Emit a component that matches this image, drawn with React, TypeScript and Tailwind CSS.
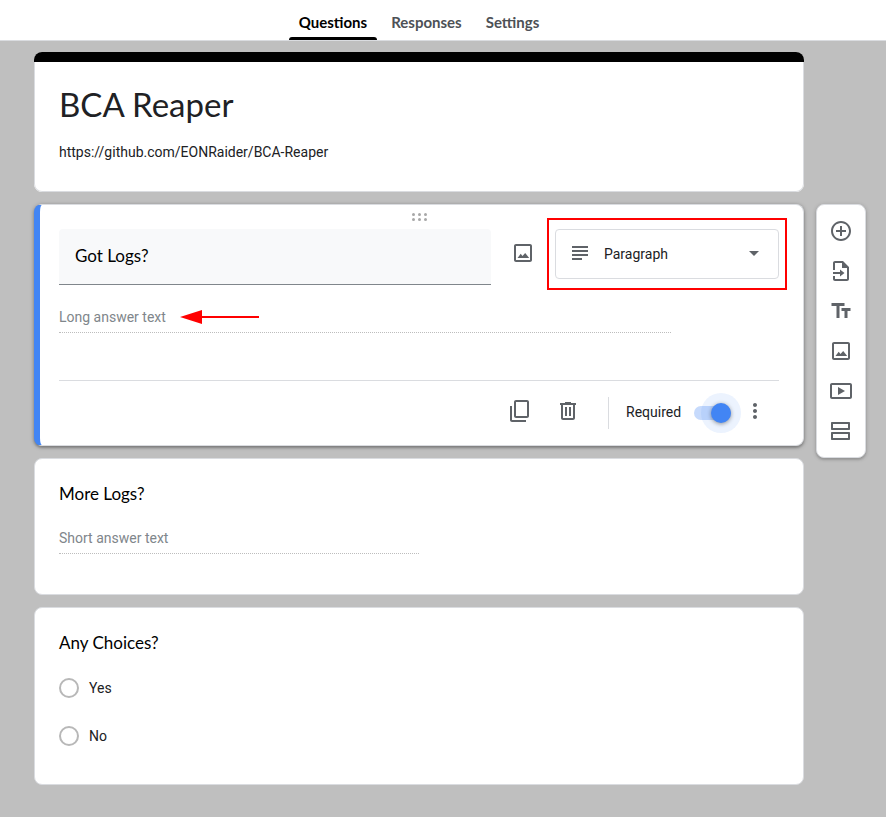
import type { ReactNode } from "react";

const display = "font-['Google_Sans',Lato,sans-serif]";

function Icon({ children }: { children: ReactNode }) {
  return (
    <svg viewBox="0 0 24 24" className="size-6 shrink-0 fill-[#5f6368]" aria-hidden="true">
      {children}
    </svg>
  );
}

const imageIcon = (
  <Icon>
    <path d="M19 5v14H5V5h14m0-2H5c-1.100 0-2 .9-2 2v14c0 1.100.9 2 2 2h14c1.100 0 2-.9 2-2V5c0-1.100-.9-2-2-2z" />
    <path d="M14.200 12l-2.700 3-1.800-2.200L6.500 17h11.700z" />
  </Icon>
);

const tools = [
  {
    label: "Add question",
    icon: (
      <Icon>
        <path d="M13 7h-2v4H7v2h4v4h2v-4h4v-2h-4V7zm-1-5C6.480 2 2 6.480 2 12s4.480 10 10 10 10-4.480 10-10S17.520 2 12 2zm0 18c-4.410 0-8-3.590-8-8s3.590-8 8-8 8 3.590 8 8-3.590 8-8 8z" />
      </Icon>
    ),
  },
  {
    label: "Import questions",
    icon: (
      <Icon>
        <path d="M14 2H6c-1.100 0-2 .9-2 2v7h2V4h7v5h5v11H6v-3H4v3c0 1.100.9 2 2 2h12c1.100 0 2-.9 2-2V8l-6-6z" />
        <path d="M4 13h7v-2.500l4.500 3.500-4.500 3.500V15H4z" />
      </Icon>
    ),
  },
  {
    label: "Add title and description",
    icon: (
      <Icon>
        <path d="M2.500 4v3h5v12h3V7h5V4h-13zm19 5h-9v3h3v7h3v-7h3V9z" />
      </Icon>
    ),
  },
  { label: "Add image", icon: imageIcon },
  {
    label: "Add video",
    icon: (
      <Icon>
        <path d="M21 4H3c-1.100 0-2 .9-2 2v12c0 1.100.9 2 2 2h18c1.100 0 2-.9 2-2V6c0-1.100-.9-2-2-2zm0 14H3V6h18v12z" />
        <path d="M9 8v8l7-4z" />
      </Icon>
    ),
  },
  {
    label: "Add section",
    icon: (
      <Icon>
        <path d="M19 5v4H4V5h15m1-2H3c-.6 0-1 .4-1 1v6c0 .6.4 1 1 1h17c.6 0 1-.4 1-1V4c0-.6-.4-1-1-1zM19 15v4H4v-4h15m1-2H3c-.6 0-1 .4-1 1v6c0 .6.4 1 1 1h17c.6 0 1-.4 1-1v-6c0-.6-.4-1-1-1z" />
      </Icon>
    ),
  },
];

function Tab({ label, active }: { label: string; active?: boolean }) {
  return (
    <button
      type="button"
      role="tab"
      aria-selected={!!active}
      className={`${display} flex flex-col justify-between text-[15px] font-bold ${active ? "text-black" : "text-[#4d5156]"}`}
    >
      <span className="px-3 pt-3 leading-5">{label}</span>
      <span className={`mx-0.5 h-[3px] self-stretch rounded-t-sm ${active ? "bg-black" : "bg-transparent"}`} />
    </button>
  );
}

function Choice({ label }: { label: string }) {
  return (
    <label className="flex h-12 items-center gap-2.5">
      <input type="radio" name="choice" className="size-5 appearance-none rounded-full border-2 border-[#b8b8b8] bg-white" />
      {label}
    </label>
  );
}

export default function App() {
  return (
    <div className="flex min-h-screen flex-col bg-[#bfbfbf] font-[Roboto,sans-serif] text-sm text-[#202124]">
      <header className="h-[41px] border-b border-[#dadce0] bg-white pr-[82px] pl-[34px]">
        <div role="tablist" className="flex h-full justify-center">
          <Tab label="Questions" active />
          <Tab label="Responses" />
          <Tab label="Settings" />
        </div>
      </header>

      <div className="flex items-start gap-3 pt-[11px] pr-5 pb-8 pl-[34px]">
        <main className="flex min-w-0 flex-1 flex-col gap-3">
          <section className="overflow-hidden rounded-lg bg-white">
            <div className="h-2.5 bg-black" />
            <div className="rounded-b-lg border border-t-0 border-[#dadce0] px-6 pt-[19px] pb-[29px]">
              <h1 className={`${display} text-[33px] leading-[46px]`}>BCA Reaper</h1>
              <p className="pt-[15px] leading-5">https://github.com/EONRaider/BCA-Reaper</p>
            </div>
          </section>

          <section className="rounded-lg border border-l-[6px] border-[#dadce0] border-l-[#4285f4] bg-white pr-6 pl-[19px] shadow-[0_2px_2px_rgba(0,0,0,0.14),0_1px_4px_rgba(0,0,0,0.35)]">
            <div className="flex h-6 justify-center pt-2">
              <svg viewBox="0 0 15 8" className="h-2 w-[15px] fill-[#a8a8a8]" aria-hidden="true">
                <circle cx="1.500" cy="1.500" r="1.500" />
                <circle cx="7.500" cy="1.500" r="1.500" />
                <circle cx="13.500" cy="1.500" r="1.500" />
                <circle cx="1.500" cy="6.500" r="1.500" />
                <circle cx="7.500" cy="6.500" r="1.500" />
                <circle cx="13.500" cy="6.500" r="1.500" />
              </svg>
            </div>

            <div className="flex items-start">
              <input
                type="text"
                aria-label="Question"
                defaultValue="Got Logs?"
                className={`${display} h-14 min-w-0 flex-1 rounded-t border-b border-[#80868b] bg-[#f8f9fa] px-4 pb-0.5 text-[17px] text-black outline-none`}
              />
              <button type="button" aria-label="Add image to question" className="mx-2 flex size-12 items-center justify-center">
                {imageIcon}
              </button>
              <div className="relative h-[50px] w-56">
                <select
                  aria-label="Question type"
                  className="size-full appearance-none rounded border border-[#dadce0] bg-white pl-12"
                >
                  <option>Paragraph</option>
                  <option>Short answer</option>
                </select>
                <div className="pointer-events-none absolute inset-0 flex items-center justify-between px-[13px] pb-0.5">
                  <Icon>
                    <path d="M14 17H4v2h10v-2zm6-8H4v2h16V9zM4 15h16v-2H4v2zM4 5v2h16V5H4z" />
                  </Icon>
                  <Icon>
                    <path d="M7 10l5 5 5-5z" />
                  </Icon>
                </div>
                <div className="pointer-events-none absolute -inset-x-2 -inset-y-[11px] border-2 border-[#ff0000]" />
              </div>
            </div>

            <div className="mt-5 flex h-7 w-[85%] items-start gap-3.5 border-b border-dotted border-[#bdbdbd] pt-0.5 leading-5 text-[#80868b]">
              Long answer text
              <svg viewBox="0 0 79 14" className="mt-[3px] h-3.5 w-[79px] fill-[#ff0000]" aria-hidden="true">
                <path d="M0 7L22 0v6h57v2H22v6z" />
              </svg>
            </div>

            <div className="mt-[47px] flex h-[65px] items-center justify-end border-t border-[#dadce0]">
              <button type="button" aria-label="Duplicate question" className="flex size-12 items-center justify-center pb-1">
                <Icon>
                  <path d="M19 3v14H8V3h11m0-2H8c-1.100 0-2 .9-2 2v14c0 1.100.9 2 2 2h11c1.100 0 2-.9 2-2V3c0-1.100-.9-2-2-2z" />
                  <path d="M2 7h2v14h14v2H4c-1.100 0-2-.9-2-2z" />
                </Icon>
              </button>
              <button type="button" aria-label="Delete question" className="flex size-12 items-center justify-center pb-1">
                <Icon>
                  <path d="M15 4V3H9v1H4v2h1v13c0 1.100.9 2 2 2h10c1.100 0 2-.9 2-2V6h1V4h-5zm2 15H7V6h10v13zM9 8h2v9H9zm4 0h2v9h-2z" />
                </Icon>
              </button>
              <div className="mr-[17px] ml-4 h-8 w-px bg-[#dadce0]" />
              <label className="flex items-center gap-3">
                <span className="w-14 pb-0.5">Required</span>
                <input
                  type="checkbox"
                  role="switch"
                  defaultChecked
                  className="relative h-3.5 w-[37px] appearance-none rounded-full bg-[#c6dafc] before:absolute before:-top-[3px] before:right-0 before:size-5 before:rounded-full before:bg-[#4285f4] before:shadow-[0_1px_4px_rgba(0,0,0,0.4),0_0_0_10px_rgba(66,133,244,0.1)]"
                />
              </label>
              <button type="button" aria-label="More options" className="flex size-12 items-center justify-center pb-1">
                <Icon>
                  <path d="M12 8c1.100 0 2-.9 2-2s-.9-2-2-2-2 .9-2 2 .9 2 2 2zm0 2c-1.100 0-2 .9-2 2s.9 2 2 2 2-.9 2-2-.9-2-2-2zm0 6c-1.100 0-2 .9-2 2s.9 2 2 2 2-.9 2-2-.9-2-2-2z" />
                </Icon>
              </button>
            </div>
          </section>

          <section className="rounded-lg border border-[#dadce0] bg-white px-6 pt-[23px] pb-10">
            <h2 className={`${display} text-[17px] leading-6 text-black`}>More Logs?</h2>
            <div className="mt-[19px] h-[29px] w-1/2 border-b border-dotted border-[#bdbdbd] pt-[3px] leading-5 text-[#80868b]">
              Short answer text
            </div>
          </section>

          <section className="rounded-lg border border-[#dadce0] bg-white px-6 pt-[23px] pb-6">
            <h2 className={`${display} mb-[9px] text-[17px] leading-6 text-black`}>Any Choices?</h2>
            <Choice label="Yes" />
            <Choice label="No" />
          </section>
        </main>

        <aside className="mt-[152px] flex w-[50px] flex-col items-center rounded-lg border border-[#dadce0] bg-white py-1.5 shadow-[0_2px_2px_rgba(0,0,0,0.1),0_1px_4px_rgba(0,0,0,0.2)]">
          {tools.map((tool) => (
            <button key={tool.label} type="button" aria-label={tool.label} className="flex size-10 items-center justify-center">
              {tool.icon}
            </button>
          ))}
        </aside>
      </div>
    </div>
  );
}
